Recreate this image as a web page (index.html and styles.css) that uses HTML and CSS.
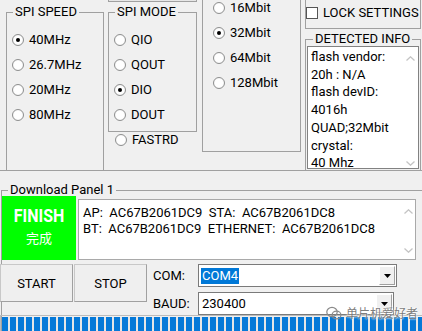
FILE: index.html
```html
<!DOCTYPE html>
<html lang="en">
<head>
    <meta charset="UTF-8">
    <meta name="viewport" content="width=device-width, initial-scale=1.0">
    <title>Flash Download Tool</title>
    <link rel="stylesheet" href="styles.css">
</head>
<body>
    <div class="top">
        <fieldset class="group speed">
            <legend>SPI SPEED</legend>
            <label class="radio checked"><span class="dot"></span>40MHz</label>
            <label class="radio"><span class="dot"></span>26.7MHz</label>
            <label class="radio"><span class="dot"></span>20MHz</label>
            <label class="radio"><span class="dot"></span>80MHz</label>
        </fieldset>
        <div class="mode-col">
            <div class="cut-btn"></div>
            <fieldset class="group mode">
                <legend>SPI MODE</legend>
                <label class="radio"><span class="dot"></span>QIO</label>
                <label class="radio"><span class="dot"></span>QOUT</label>
                <label class="radio checked"><span class="dot"></span>DIO</label>
                <label class="radio"><span class="dot"></span>DOUT</label>
            </fieldset>
            <label class="radio tight"><span class="dot"></span>FASTRD</label>
        </div>
        <div class="box flash">
            <label class="radio"><span class="dot"></span>16Mbit</label>
            <label class="radio checked"><span class="dot"></span>32Mbit</label>
            <label class="radio"><span class="dot"></span>64Mbit</label>
            <label class="radio"><span class="dot"></span>128Mbit</label>
        </div>
        <div class="right-col">
            <div class="box lock"><span class="check"></span>LOCK SETTINGS</div>
            <fieldset class="group info">
                <legend>DETECTED INFO</legend>
                <div class="memo">
                    <div class="memo-text">flash vendor:<br>20h : N/A<br>flash devID:<br>4016h<br>QUAD;32Mbit<br>crystal:<br>40 Mhz</div>
                    <div class="scroll">
                        <svg width="9" height="5" viewBox="0 0 9 5"><path d="M0.5 4.5 L4.5 0.8 L8.5 4.5" fill="none" stroke="#c4c4c4" stroke-width="1.3"/></svg>
                        <svg width="9" height="5" viewBox="0 0 9 5"><path d="M0.5 0.5 L4.5 4.2 L8.5 0.5" fill="none" stroke="#c4c4c4" stroke-width="1.3"/></svg>
                    </div>
                </div>
            </fieldset>
        </div>
    </div>

    <fieldset class="group dl">
        <legend>Download Panel 1</legend>
        <div class="row1">
            <div class="finish">
                <div class="fin-en">FINISH</div>
                <div class="fin-cn">完成</div>
            </div>
            <div class="out">
                <div class="out-text">AP:  AC67B2061DC9  STA:  AC67B2061DC8
BT:  AC67B2061DC9  ETHERNET:  AC67B2061DC8</div>
                <div class="scroll out-scroll">
                    <svg width="9" height="5" viewBox="0 0 9 5"><path d="M0.5 4.5 L4.5 0.8 L8.5 4.5" fill="none" stroke="#c4c4c4" stroke-width="1.3"/></svg>
                    <svg width="9" height="5" viewBox="0 0 9 5"><path d="M0.5 0.5 L4.5 4.2 L8.5 0.5" fill="none" stroke="#c4c4c4" stroke-width="1.3"/></svg>
                </div>
            </div>
        </div>
        <div class="row2">
            <div class="btn">START</div>
            <div class="btn stop">STOP</div>
            <div class="ports">
                <span class="port-label">COM:</span>
                <div class="combo">
                    <span class="selected">COM4</span>
                    <span class="drop"><svg width="7" height="4" viewBox="0 0 7 4"><path d="M0 0 H7 L3.5 4 Z" fill="#000"/></svg></span>
                </div>
                <span class="port-label">BAUD:</span>
                <div class="combo baud">
                    <span class="value">230400</span>
                    <span class="drop"><svg width="7" height="4" viewBox="0 0 7 4"><path d="M0 0 H7 L3.5 4 Z" fill="#000"/></svg></span>
                </div>
            </div>
        </div>
        <div class="bar"></div>
    </fieldset>

    <div class="watermark">
        <svg width="16" height="14" viewBox="0 0 16 14"><ellipse cx="6" cy="6" rx="5.2" ry="4.6" fill="none" stroke="#8a8a8a" stroke-width="1.2"/><ellipse cx="10.5" cy="9" rx="4.4" ry="3.8" fill="none" stroke="#8a8a8a" stroke-width="1.2"/></svg>
        <span>单片机爱好者</span>
    </div>
</body>
</html>
```

FILE: styles.css
```css
body {
    margin: 0;
    width: 422px;
    height: 331px;
    overflow: hidden;
    position: relative;
    background-color: #f0f0f0;
    font-family: Roboto, "Noto Sans CJK SC", sans-serif;
    font-size: 13px;
    color: #000;
}
.top {
    display: flex;
    align-items: flex-start;
    height: 170px;
    overflow: hidden;
    border-bottom: 1px solid #a0a0a0;
}
fieldset.group {
    margin: 0;
    padding: 0;
    min-width: 0;
    border: 1px solid #a0a0a0;
}
legend {
    margin-left: 6px;
    padding: 0 2px;
    line-height: 14px;
}
.box {
    box-sizing: border-box;
    border: 1px solid #a0a0a0;
}

/* radio buttons */
.radio {
    display: flex;
    align-items: center;
    height: 25px;
    padding-left: 5px;
}
.radio.tight {
    height: 15px;
    padding-left: 7px;
}
.dot {
    box-sizing: border-box;
    width: 12px;
    height: 12px;
    margin-right: 5px;
    border: 1px solid #8e8f8f;
    border-radius: 50%;
    background: radial-gradient(circle, #fff 0, #fff 50%, #e8e8e8 100%);
    display: flex;
    align-items: center;
    justify-content: center;
}
.checked .dot::after {
    content: "";
    width: 4px;
    height: 4px;
    border-radius: 50%;
    background-color: #000;
}

/* top columns */
.speed {
    box-sizing: border-box;
    width: 98px;
    height: 180px;
    margin: 5px 0 0 6px !important;
    padding-top: 8px !important;
}
.mode-col {
    width: 89px;
    margin-left: 4px;
}
.cut-btn {
    height: 1px;
    border: 1px solid #a0a0a0;
    border-top: none;
    background-color: #e6e6e6;
}
.mode {
    margin-top: 3px !important;
    padding: 8px 0 4px !important;
}
.flash {
    width: 99px;
    height: 162px;
    margin: -10px 0 0 5px;
    padding: 4px 0 0 5px;
}
.right-col {
    width: 116px;
    margin-left: 4px;
}
.lock {
    display: flex;
    align-items: center;
    height: 39px;
    margin-top: -10px;
    padding-top: 6px;
}
.check {
    box-sizing: border-box;
    width: 12px;
    height: 12px;
    margin: 0 5px 0 0;
    border: 1px solid #555;
    background-color: #fff;
}
.info {
    box-sizing: border-box;
    height: 200px;
    margin-top: 3px !important;
    padding: 0 1px !important;
}
.memo {
    display: flex;
    box-sizing: border-box;
    height: 123px;
    background-color: #fff;
    border: 1px solid #828282;
}
.memo-text {
    flex: 1;
    padding: 1px 0 0 3px;
    line-height: 17.7px;
    white-space: nowrap;
}
.scroll {
    width: 16px;
    display: flex;
    flex-direction: column;
    justify-content: space-between;
    align-items: center;
    padding: 9px 0 2px;
}

/* download panel */
.dl {
    width: 440px;
    margin: 12px 0 0 1px !important;
}
.row1 {
    display: flex;
    margin-top: -1px;
}
.finish {
    width: 74px;
    height: 64px;
    box-sizing: border-box;
    padding-top: 8px;
    display: flex;
    flex-direction: column;
    align-items: center;
    background-color: #00ff00;
    color: #fff;
}
.fin-en {
    font-weight: bold;
    font-size: 19px;
    line-height: 24px;
    transform: scaleX(0.84);
}
.fin-cn {
    font-family: "Noto Sans CJK SC", sans-serif;
    font-size: 13px;
    line-height: 20px;
}
.out {
    display: flex;
    box-sizing: border-box;
    width: 338px;
    height: 61px;
    margin: 3px 0 0 2px;
    background-color: #fff;
    border: 1px solid #a9a9a9;
}
.out-text {
    flex: 1;
    padding: 5px 0 0 4px;
    line-height: 16px;
    white-space: pre;
}
.out-scroll {
    width: 14px;
    padding: 9px 0 6px;
}
.row2 {
    display: flex;
    align-items: flex-start;
    margin: 4px 0 0 -2px;
}
.btn {
    box-sizing: border-box;
    width: 73px;
    height: 38px;
    display: flex;
    align-items: center;
    justify-content: center;
    background-color: #efefef;
    border: 1px solid;
    border-color: #c8c8c8 #a0a0a0 #a0a0a0 #c8c8c8;
}
.stop {
    margin-left: 1px;
}
.ports {
    display: grid;
    grid-template-columns: 45px auto;
    row-gap: 5px;
    align-items: center;
    margin-left: 6px;
}
.combo {
    box-sizing: border-box;
    width: 199px;
    height: 23px;
    display: flex;
    align-items: center;
    background-color: #fff;
    border: 1px solid #7a7a7a;
}
.combo.baud {
    width: 196px;
}
.selected {
    margin-left: 2px;
    padding: 0 1px;
    line-height: 16px;
    background-color: #0078d7;
    color: #fff;
}
.value {
    margin-left: 3px;
}
.drop {
    box-sizing: border-box;
    width: 16px;
    height: 19px;
    margin: 0 1px 0 auto;
    display: flex;
    align-items: center;
    justify-content: center;
    background-color: #f0f0f0;
    border: 1px solid;
    border-color: #fff #a0a0a0 #a0a0a0 #fff;
}
.bar {
    height: 20px;
    margin-left: -2px;
    padding: 1px;
    border: 1px solid #bcbcbc;
    background: repeating-linear-gradient(90deg, #0679d8 0, #0679d8 6px, #e6e6e6 6px, #e6e6e6 8px) content-box;
}
.watermark {
    position: absolute;
    left: 326px;
    top: 304px;
    display: flex;
    align-items: center;
    gap: 4px;
    font-family: "Noto Sans CJK SC", sans-serif;
    font-size: 12px;
    color: rgba(90, 90, 90, 0.8);
    text-shadow: 0 0 2px #fff, 0 0 2px #fff;
}
```
